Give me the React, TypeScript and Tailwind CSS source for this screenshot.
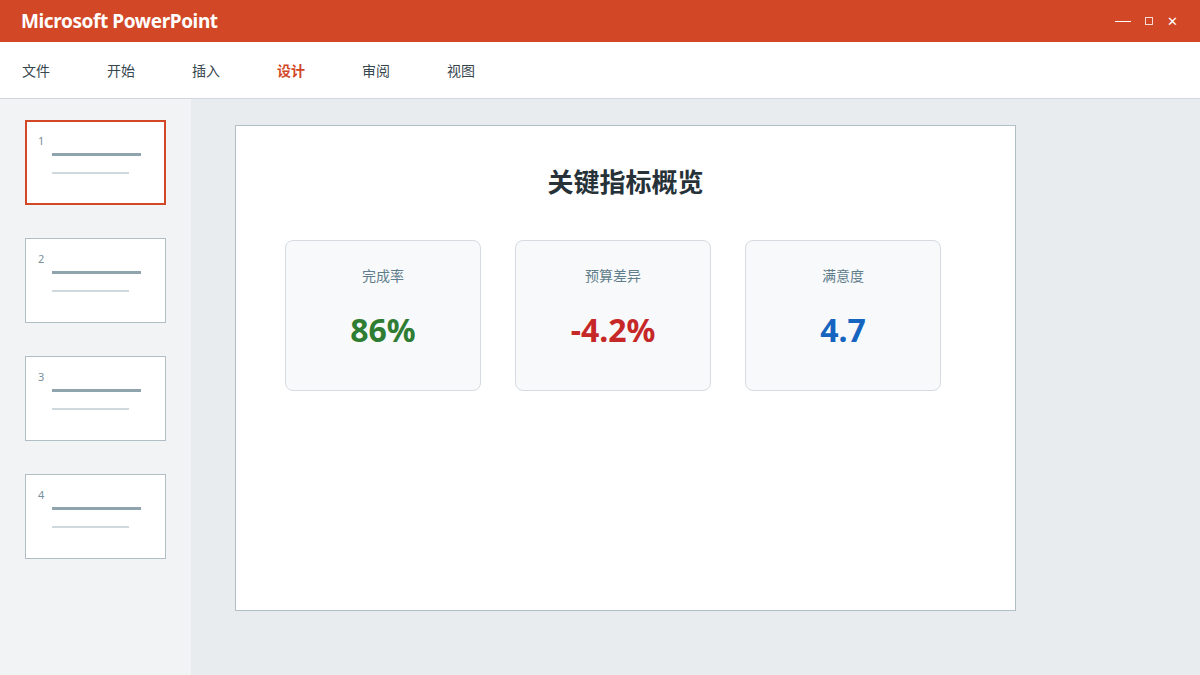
import React from "react";

const tabs = ["文件", "开始", "插入", "设计", "审阅", "视图"];
const cards = [
  { label: "完成率", value: "86%", color: "text-[#2e7d32]" },
  { label: "预算差异", value: "-4.2%", color: "text-[#c62828]" },
  { label: "满意度", value: "4.7", color: "text-[#1565c0]" },
];

export default function App() {
  return (
    <div
      className="w-[1200px] h-[675px] flex flex-col overflow-hidden bg-[#e8ecef]"
      style={{ fontFamily: '"Noto Sans", "Noto Sans CJK SC", sans-serif' }}
    >
      <div className="h-[42px] shrink-0 bg-[#d24726] flex items-center justify-between pl-[21px] pr-[22px] text-white">
        <div className="text-[19px] font-bold tracking-[-0.4px]">Microsoft PowerPoint</div>
        <div className="flex items-center gap-[14px] text-[12px] leading-none">
          <span className="block w-[16px] h-[1px] bg-white" />
          <span className="block w-[8px] h-[8px] border border-white/80" />
          <span className="text-[13px]">✕</span>
        </div>
      </div>
      <div className="h-[57px] shrink-0 bg-white border-b border-[#d0d7de] flex items-center pl-[22px]">
        {tabs.map((t) => (
          <div
            key={t}
            className={`w-[85px] text-[14px] ${
              t === "设计" ? "text-[#d24726] font-bold" : "text-[#37474f]"
            }`}
            style={{ fontFamily: '"Noto Sans CJK SC", sans-serif' }}
          >
            {t}
          </div>
        ))}
      </div>
      <div className="flex flex-1 min-h-0">
        <div className="w-[191px] shrink-0 bg-[#f1f3f5] pt-[21px] pl-[25px] flex flex-col gap-[33px]">
          {[1, 2, 3, 4].map((n) => (
            <div
              key={n}
              className={`w-[141px] h-[85px] shrink-0 bg-white relative ${
                n === 1 ? "border-2 border-[#d24726]" : "border border-[#b0bec5]"
              }`}
            >
              <div
                className={`absolute text-[11px] text-[#78909c] leading-none ${
                  n === 1 ? "left-[11px] top-[13px]" : "left-[12px] top-[14px]"
                }`}
              >
                {n}
              </div>
              <div
                className={`absolute w-[89px] h-[3px] bg-[#90a4ae] ${
                  n === 1 ? "left-[25px] top-[31px]" : "left-[26px] top-[32px]"
                }`}
              />
              <div
                className={`absolute w-[77px] h-[2px] bg-[#cfd8dc] ${
                  n === 1 ? "left-[25px] top-[50px]" : "left-[26px] top-[51px]"
                }`}
              />
            </div>
          ))}
        </div>
        <div className="flex-1 pt-[26px] pl-[44px]">
          <div className="w-[781px] h-[486px] bg-white border border-[#b0bec5] flex flex-col items-center">
            <div
              className="mt-[37px] text-[26px] font-bold text-[#263238] leading-[36px]"
              style={{ fontFamily: '"Noto Sans CJK SC", sans-serif' }}
            >
              关键指标概览
            </div>
            <div className="mt-[41px] flex gap-[34px] self-start ml-[49px]">
              {cards.map((c) => (
                <div
                  key={c.label}
                  className="w-[196px] h-[151px] bg-[#f8f9fb] border border-[#d5dbe0] rounded-[8px] flex flex-col items-center"
                >
                  <div
                    className="mt-[24px] text-[14px] text-[#607d8b] leading-[20px]"
                    style={{ fontFamily: '"Noto Sans CJK SC", sans-serif' }}
                  >
                    {c.label}
                  </div>
                  <div
                    className={`mt-[23px] text-[32px] font-bold leading-[44px] ${c.color}`}
                    style={{ fontFamily: '"Noto Sans", sans-serif' }}
                  >
                    {c.value}
                  </div>
                </div>
              ))}
            </div>
          </div>
        </div>
      </div>
    </div>
  );
}
